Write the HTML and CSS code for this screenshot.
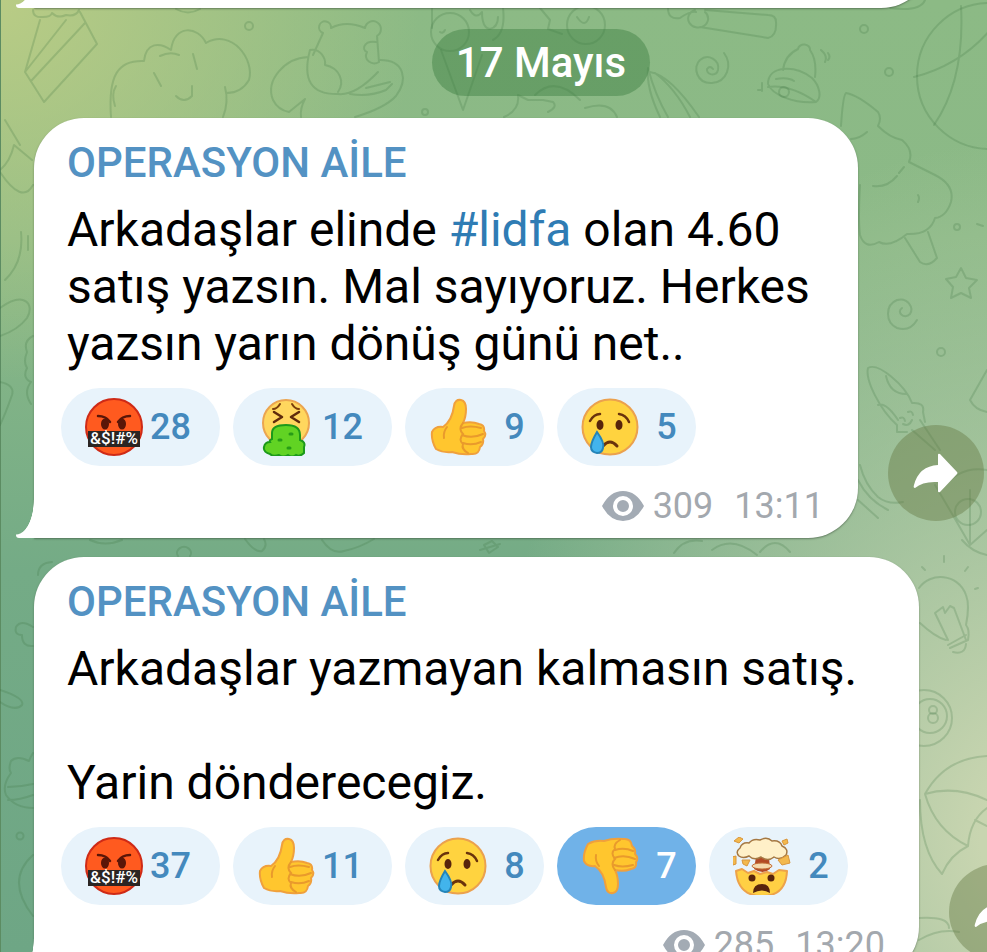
FILE: index.html
```html
<!DOCTYPE html>
<html lang="tr">
<head>
    <meta charset="UTF-8">
    <meta name="viewport" content="width=device-width, initial-scale=1.0">
    <title>OPERASYON AİLE</title>
    <link rel="stylesheet" href="styles.css">
</head>
<body>
    <!-- Emoji ve ikon tanımları -->
    <svg class="defs" aria-hidden="true">
        <symbol id="cursing" viewBox="0 0 58 58">
            <circle cx="29" cy="29" r="28" fill="#ff5a1f" stroke="#cf2a16" stroke-width="2"/>
            <path d="M13 18q8 0 12 6M45 18q-8 0-12 6" fill="none" stroke="#5a1608" stroke-width="2.5" stroke-linecap="round"/>
            <ellipse cx="20" cy="26" rx="4" ry="5.500" fill="#5a1608"/>
            <ellipse cx="37" cy="26" rx="4" ry="5.500" fill="#5a1608"/>
            <rect x="3" y="33" width="52" height="16" fill="#2b2523"/>
            <text x="29" y="46" text-anchor="middle" class="curse">&amp;$!#%</text>
        </symbol>
        <symbol id="vomit" viewBox="0 0 58 58">
            <circle cx="29" cy="25" r="23" fill="#ffd75e" stroke="#eba550" stroke-width="2"/>
            <path d="M16 11q4 0 7-5M42 11q-4 0-7-5" fill="none" stroke="#7a3d0c" stroke-width="2" stroke-linecap="round"/>
            <path d="M17 14l8 5-8 5M42 14l-8 5 8 5" fill="none" stroke="#5f2b0c" stroke-width="2.500" stroke-linecap="round" stroke-linejoin="round"/>
            <path d="M15 41V35Q15 27 29 27Q43 27 43 37L43 42Q49 44 47 49L47 55Q43 59 39 57Q35 60 31 57Q26 60 22 57Q16 59 13 56Q6 54 7 49Q8 44 13 44Q12 42 15 41Z" fill="#61d323" stroke="#1c9a1a" stroke-width="2"/>
            <path d="M33 36h2M22 42h2M31 50h2" stroke="#279c16" stroke-width="3" stroke-linecap="round"/>
        </symbol>
        <symbol id="thumb" viewBox="0 0 58 58">
            <path d="M25 8Q26 1 32 2Q37 3 37 11Q37 19 34 25Q43 23 50 26Q56 27 55 33Q58 37 54 41Q55 46 51 49Q50 57 42 56Q32 57 23 54Q14 55 7 51Q2 42 3 34Q6 28 14 29Q23 23 25 8Z" fill="#ffc62e" stroke="#f0a03c" stroke-width="2" stroke-linejoin="round"/>
            <path d="M34 25Q29 31 34 36Q29 42 34 46Q32 51 39 55M33 30Q41 27 52 30M33 37Q43 41 54 36M34 45Q43 48 52 44M18 29Q14 34 15 40" fill="none" stroke="#e99a2c" stroke-width="2" stroke-linecap="round"/>
        </symbol>
        <symbol id="cry" viewBox="0 0 58 58">
            <circle cx="29" cy="29" r="27.500" fill="#ffd33f" stroke="#eba14e" stroke-width="2"/>
            <path d="M9 23q4-7 10-7M38 16q7 1 10 8" fill="none" stroke="#6a330c" stroke-width="2.500" stroke-linecap="round"/>
            <ellipse cx="19" cy="27" rx="3.500" ry="5" fill="#57240c"/>
            <ellipse cx="38" cy="27" rx="3.500" ry="5" fill="#57240c"/>
            <path d="M22 48q7-8 14 0" fill="none" stroke="#6a330c" stroke-width="3" stroke-linecap="round"/>
            <path d="M16 34Q24 45 22 50Q21 55 16 55Q10 54 10 49Q10 44 16 34Z" fill="#42b4ec" stroke="#2484b8" stroke-width="2"/>
        </symbol>
        <symbol id="mindblown" viewBox="0 0 58 58">
            <path d="M3 34L9 32L15 36L21 34L27 37L34 35L40 37L46 33L54 34Q53 59 29 59Q5 59 3 34Z" fill="#ffd044" stroke="#eda24a" stroke-width="2" stroke-linejoin="round"/>
            <path d="M23 20L36 20L37 32Q30 38 21 32Z" fill="#b34a26"/>
            <ellipse cx="29" cy="29" rx="10" ry="3" fill="#f6d9ad" stroke="#c37038" stroke-width="1"/>
            <path d="M6 19Q2 15 7 11Q9 5 16 6Q20 1 27 3Q34-1 39 4Q47 3 49 9Q56 12 53 18Q47 24 41 20Q35 25 28 20Q21 24 16 19Q10 22 6 19Z" fill="#fff0c8" stroke="#a57843" stroke-width="1.500"/>
            <path d="M1 4l5-4 4 2-4 4zM49 4l5-2 1 4-4 2zM-1 20l4-1v8l-3 1zM9 23l8 0-3 6-4-2zM45 23l10-5 2 8-8 2z" fill="#f3b94d" stroke="#d9963c" stroke-width="1"/>
            <circle cx="19" cy="41" r="3.500" fill="#57240c"/>
            <circle cx="38" cy="41" r="3.500" fill="#57240c"/>
            <path d="M20 56Q20 47 29 47Q37 47 37 56Q29 51 20 56Z" fill="#57240c"/>
        </symbol>
        <symbol id="eye" viewBox="0 0 42 30">
            <path fill-rule="evenodd" d="M0 15Q8 0 21 0T42 15Q34 30 21 30T0 15ZM21 5a10 10 0 1 0 0 20a10 10 0 1 0 0-20ZM21 9a6 6 0 1 0 0 12a6 6 0 1 0 0-12Z" fill="#a3abb4"/>
        </symbol>
        <symbol id="share" viewBox="0 0 46 40">
            <path d="M25 2Q25 0 27 1L44 19Q45 20 44 21L27 39Q25 40 25 38V29Q10 28 2 35Q0 35 1 32Q6 13 25 12Z" fill="#fff"/>
        </symbol>
    </svg>

    <!-- Duvar kağıdı çizimleri -->
    <svg class="wallpaper" aria-hidden="true">
        <g class="doodle">
            <path d="M40 20L25 72L44 102L97 44L80 12M25 72L66 20M31 81L85 23M33 10q0 8 10 7q8 0 9-4q6 6 14 2q10 2 13-5"/>
            <path d="M111 117C108 75 118 60 144 61C146 42 160 42 171 50C174 24 198 26 206 43C232 28 255 60 249 80C243 90 235 93 227 93M225 87q4 15-2 30M160 56q10-5 19-1M193 54l4 15M154 73l7 13M176 96q8 8 16 0v-10M116 86q-5 8-1 20"/>
            <path d="M313 55L323 33A6 6 0 1 1 331 28Q346 20 365 28A8 8 0 1 1 377 36L379 62M310 50C320 48 326 58 325 65C340 68 345 82 338 92M308 57C285 58 265 80 273 100Q278 110 289 112L305 99Q300 108 301 117M310 50Q298 95 338 94Q355 96 378 72M380 60C405 60 408 80 396 96Q385 108 355 117M350 94q20 3 36-4l6-6M366 88l24-6M376 42c-12-2-15 8-9 10c-4 8 5 14 12 10"/>
            <path d="M176 9q12 7 24 0"/>
            <circle cx="249" cy="26" r="4"/>
            <circle cx="425" cy="112" r="3"/>
            <circle cx="450" cy="32" r="19"/>
            <path d="M432 8V28M441 50L463 110L482 55M503 8q3 25-10 32M470 10q6 10 12 2q0 16 8 17q8-2 8-12M445 30q-2 4-5 2M540 8l10 12l-2 9l14 5M577 17q8 12 12 0"/>
            <circle cx="586" cy="25" r="19"/>
            <path d="M504 117Q520 110 518 95l10 5h15l10 2q5 5-5 10M535 95q20-20 45 5M585 108q25-8 32 9"/>
            <path d="M648 68Q655 95 668 117M648 68q-2 20 12 49M650 72Q670 75 699 117M655 73q20 15 35 44"/>
            <path d="M668 8q0 12 12 10q10-7 16-6M695 10a10 9 0 1 0 10 2M700 27L768 38Q777 36 776 22Q776 15 768 15L705 10"/>
            <path d="M724 53C733 65 727 82 712 83C697 84 692 67 700 60C708 53 720 60 718 70C716 77 706 75 707 69q3-4 6 0"/>
            <path d="M783 70Q785 55 798 49A6 5 0 0 1 810 50Q817 60 815 77M768 84C768 65 795 65 812 78C820 86 822 98 816 102C795 104 772 95 768 84M768 87q22-3 48 15M776 79q12-2 18 2M821 50q7 6 4 12M828 53q3 4 0 7M762 83v8M758 90h4"/>
            <circle cx="784" cy="92" r="5"/>
            <circle cx="864" cy="29" r="4"/>
            <circle cx="889" cy="72" r="4"/>
            <circle cx="957" cy="227" r="3"/>
            <circle cx="990" cy="76" r="73"/>
            <path d="M961 6Q965 80 934 125M914 77Q960 65 990 30M925 0q-5 12-35 8"/>
            <path d="M841 126Q843 95 846 93Q858 95 878 112Q882 118 878 126Q890 138 902 140Q914 150 909 162Q925 170 935 175Q955 185 951 202Q946 217 935 218Q930 235 907 234Q890 248 879 242Q865 250 860 235Q858 220 860 185M851 139q8 0 16-7M873 186q14 2 24-10M899 173l5-6M905 238L920 262Q928 268 937 258L928 232M918 195q2 3 0 7M977 224l6 2"/>
            <path d="M961 268l5 10l11 2l-8 8l2 10l-10-5l-10 5l2-11l-7-8l10-2z"/>
            <path d="M917 320Q910 332 897 328C885 322 885 305 897 300C908 297 914 308 910 314C904 320 896 312 902 308"/>
            <circle cx="941" cy="352" r="4"/>
            <path d="M897 425C880 410 865 380 868 368C878 362 905 385 912 403Q925 402 923 412L925 422M897 425v7h10M886 376q4 18 20 18M878 405q8-3 20 15M912 430L935 450M920 420L940 450M900 418q4-2 5 3M908 412q4-2 5 3M903 424q6 3 9-4"/>
            <path d="M987 370L970 400Q975 410 987 412M935 485q15 25 35 60L987 530M940 490q20-25 47-20M970 490v55"/>
            <circle cx="968" cy="512" r="13"/>
            <path d="M860 465q5 20 18 32q10 8 25 5M858 480q10 20 30 30M858 500l20 18"/>
            <path d="M90 540q15 7 32 0M178 556a7 6 0 1 1 12 0M245 539q10 14 17 12q6-5 2-12M322 540q10 15 22 11q15-3 30-12M484 545l8-4l6 6l-9 6zM480 550l20-6M674 553q10-15 28-12M712 550q20-15 45 5M760 552q15-18 30 0M962 540q10 12 25 15"/>
            <path d="M919 588C930 572 958 573 966 595Q970 605 966 625Q970 630 968 640L950 648M920 623Q935 637 946 640M948 645L966 635M953 652q12 3 13-8M948 640L935 613l8-6l2 6l5-7l4 2l12 32M922 567l3 3M944 556v6M965 571l3-4M975 589l3-1"/>
            <circle cx="924" cy="718" r="28"/>
            <circle cx="930" cy="716" r="17"/>
            <circle cx="933" cy="710" r="4"/>
            <circle cx="933" cy="718" r="5"/>
            <path d="M987 756Q945 758 925 794Q955 785 987 800M925 794Q935 830 968 846Q970 820 987 808M920 800Q920 850 942 874Q950 855 968 846M975 820l12 6M919 918q30-2 30 10M919 940q20-12 40-8"/>
            <path d="M5 120L20 145M0 172Q22 205 33 185M0 170q10-8 14-25L32 160M21 232q3 30-16 48M28 236v14M0 308C25 290 35 305 27 318Q18 330 0 336M33 336q-10 5-6 16q-4 10 0 16q-5 10 4 14q-8 10 0 22M0 382Q15 385 12 395Q5 415 0 425"/>
            <path d="M38 575q0-12 14-13M33 627q-12-8-17 0q-2 8 6 8q0 12 11 11M0 690Q25 698 22 705Q15 712 0 702M33 753q-3 5-4 8q-12-6-18 0q-3 8 0 12Q2 785 6 795Q15 808 33 808M8 787q12 0 25-3M8 800q12 0 25-5M33 855Q5 880 33 916"/>
            <circle cx="20" cy="836" r="3.500"/>
        </g>
    </svg>

    <main class="chat">
        <div class="row row-wide">
            <div class="bubble previous"></div>
        </div>

        <div class="date-row">
            <time class="date">17 Mayıs</time>
        </div>

        <div class="row">
            <article class="bubble">
                <h2 class="name">OPERASYON AİLE</h2>
                <p class="text">Arkadaşlar elinde <a href="#lidfa">#lidfa</a> olan 4.60 satış yazsın. Mal sayıyoruz. Herkes yazsın yarın dönüş günü net..</p>
                <div class="reactions">
                    <button class="reaction" type="button"><svg class="emoji"><use href="#cursing"/></svg><span class="count">28</span></button>
                    <button class="reaction" type="button"><svg class="emoji"><use href="#vomit"/></svg><span class="count">12</span></button>
                    <button class="reaction single" type="button"><svg class="emoji"><use href="#thumb"/></svg><span class="count">9</span></button>
                    <button class="reaction single" type="button"><svg class="emoji"><use href="#cry"/></svg><span class="count">5</span></button>
                </div>
                <footer class="meta">
                    <svg class="eye"><use href="#eye"/></svg>
                    <span class="views">309</span>
                    <time>13:11</time>
                </footer>
            </article>
            <button class="share" type="button" aria-label="Paylaş"><svg><use href="#share"/></svg></button>
        </div>

        <div class="row row-wide">
            <article class="bubble">
                <h2 class="name">OPERASYON AİLE</h2>
                <p class="text">Arkadaşlar yazmayan kalmasın satış.<br><br>Yarin dönderecegiz.</p>
                <div class="reactions">
                    <button class="reaction" type="button"><svg class="emoji"><use href="#cursing"/></svg><span class="count">37</span></button>
                    <button class="reaction" type="button"><svg class="emoji"><use href="#thumb"/></svg><span class="count">11</span></button>
                    <button class="reaction single" type="button"><svg class="emoji"><use href="#cry"/></svg><span class="count">8</span></button>
                    <button class="reaction single chosen" type="button"><svg class="emoji flipped"><use href="#thumb"/></svg><span class="count">7</span></button>
                    <button class="reaction single" type="button"><svg class="emoji"><use href="#mindblown"/></svg><span class="count">2</span></button>
                </div>
                <footer class="meta">
                    <svg class="eye"><use href="#eye"/></svg>
                    <span class="views">285</span>
                    <time>13:20</time>
                </footer>
            </article>
            <button class="share" type="button" aria-label="Paylaş"><svg><use href="#share"/></svg></button>
        </div>
    </main>
</body>
</html>
```
FILE: styles.css
```css
* {
    box-sizing: border-box;
}

body {
    margin: 0;
    height: 100vh;
    overflow: hidden;
    position: relative;
    font-family: Roboto, "Liberation Sans", sans-serif;
    color: #000;
    background:
        linear-gradient(90deg, #5c8c62 1px, transparent 1px),
        radial-gradient(ellipse 420px 380px at 0 0, #b9cc85, rgba(185, 204, 133, 0)),
        radial-gradient(ellipse 560px 700px at 105% 88%, #c8d5b0 10%, rgba(200, 213, 176, 0)),
        linear-gradient(180deg, #8cba85 0%, #8bb987 25%, #74ab86 60%, #6ea685 100%);
}

.defs {
    display: none;
}

/* Duvar kağıdı */
.wallpaper {
    position: absolute;
    inset: 0;
    width: 100%;
    height: 100%;
}

.doodle {
    fill: none;
    stroke: rgba(60, 115, 65, 0.22);
    stroke-width: 2;
    stroke-linecap: round;
    stroke-linejoin: round;
}

.chat {
    position: relative;
    padding-left: 34px;
}

/* Mesaj satırı */
.row {
    display: flex;
    align-items: flex-end;
    gap: 30px;
    margin-bottom: 19px;
    padding-right: 3px;
}

.row-wide {
    margin-right: -61px;
}

.bubble {
    position: relative;
    flex: 1;
    min-width: 0;
    padding: 21px 34px 11px 33px;
    background: #fff;
    border-radius: 50px 50px 50px 0;
    box-shadow: 0 1px 2px rgba(60, 80, 60, 0.6);
}

/* Balonun sol alt kuyruğu */
.bubble::before {
    content: "";
    position: absolute;
    left: -18px;
    bottom: 0;
    width: 18px;
    height: 38px;
    border-bottom-left-radius: 3px;
    background: radial-gradient(ellipse 18px 35px at 0 0, transparent 97%, #fff 100%);
}

.previous {
    height: 108px;
    margin-top: -100px;
    margin-right: 114px;
}

.date-row {
    display: flex;
    justify-content: center;
    margin: 21px 0 22px;
    padding-left: 61px;
}

.date {
    padding: 0 24px;
    border-radius: 34px;
    background: rgba(65, 130, 70, 0.48);
    color: #fff;
    font-size: 42px;
    font-weight: 500;
    line-height: 67px;
}

.name {
    margin: 0 0 14px;
    color: #5392c3;
    font-size: 42px;
    font-weight: 500;
    line-height: 48px;
}

.text {
    margin: 0 0 16px;
    font-size: 48px;
    line-height: 57px;
}

.text a {
    color: #2f7cb4;
    text-decoration: none;
}

/* Tepkiler */
.reactions {
    display: flex;
    gap: 13px;
    margin: 0 -6px 19px;
}

.reaction {
    display: flex;
    align-items: center;
    height: 78px;
    padding: 0 29px 0 24px;
    border: 0;
    border-radius: 39px;
    background: #e8f3fb;
    color: #4489bd;
    font-family: inherit;
    font-size: 36px;
    font-weight: 500;
}

.single {
    padding-right: 9px;
}

.chosen {
    background: #70b2e8;
    color: #fff;
}

.emoji {
    width: 58px;
    height: 58px;
    margin-right: 7px;
    overflow: visible;
}

.flipped {
    transform: scaleY(-1);
}

.curse {
    fill: #fff;
    font-size: 17px;
    font-weight: 500;
}

.count {
    width: 41px;
    text-align: center;
}

.meta {
    display: flex;
    align-items: center;
    justify-content: flex-end;
    color: #a3a8ae;
    font-size: 36px;
    line-height: 42px;
}

.eye {
    width: 42px;
    height: 30px;
    margin-right: 9px;
}

.views {
    margin-right: 21px;
}

/* Paylaş düğmesi */
.share {
    display: flex;
    flex: none;
    align-items: center;
    justify-content: center;
    width: 96px;
    height: 96px;
    margin-bottom: 17px;
    padding: 0;
    border: 0;
    border-radius: 50%;
    background: rgba(105, 125, 70, 0.45);
}

.share svg {
    width: 46px;
    height: 40px;
}
```
